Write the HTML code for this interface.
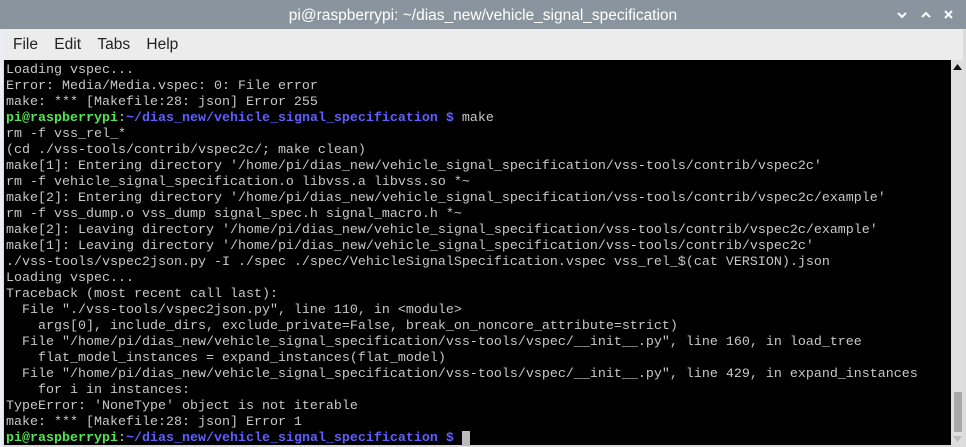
<!DOCTYPE html>
<html><head><style>
body{margin:0;width:966px;height:447px;overflow:hidden;background:#dcdcdc;font-family:"Liberation Sans",sans-serif;position:relative}
#title{position:absolute;left:0;top:0;width:966px;height:29px;background:#8a949e;color:#fff;font-size:15.5px;text-align:center;line-height:31px}
#menu{position:absolute;left:3px;top:29px;width:960px;height:31px;background:#ececec;font-size:15.5px;line-height:32px}
#menu span{margin-left:10px;margin-right:2px;color:#222}
#term{position:absolute;left:4px;top:60px;width:947px;height:385px;background:#000}
pre{margin:0;position:absolute;left:2px;top:3px;font-family:"Liberation Mono",monospace;font-size:13.33px;line-height:16px;color:#c8c8c8}
.g{color:#55e555;font-weight:bold}.b{color:#5f5fff;font-weight:bold}
.cur{background:#bbb;color:#bbb}
#sb{position:absolute;left:951px;top:60px;width:12px;height:385px;background:#dedede}
#thumb{position:absolute;left:954px;top:392px;width:8px;height:40px;background:#a8a8a8}
#lstrip{position:absolute;left:0;top:29px;width:3px;height:418px;background:#e8eef4}
</style></head><body>
<div id="title">pi@raspberrypi: ~/dias_new/vehicle_signal_specification
<svg style="position:absolute;left:896px;top:10px" width="60" height="10"><path d="M2 3l4 4 4-4" stroke="#fff" stroke-width="2" fill="none"/><path d="M26 7l4-4 4 4" stroke="#fff" stroke-width="2" fill="none"/><path d="M49 1l7 7M56 1l-7 7" stroke="#fff" stroke-width="2"/></svg></div>
<div id="lstrip"></div>
<div id="menu"><span>File</span> <span>Edit</span> <span>Tabs</span> <span>Help</span></div>
<div id="term"><pre>Loading vspec...
Error: Media/Media.vspec: 0: File error
make: *** [Makefile:28: json] Error 255
<span class="g">pi@raspberrypi</span>:<span class="b">~/dias_new/vehicle_signal_specification $</span> make
rm -f vss_rel_*
(cd ./vss-tools/contrib/vspec2c/; make clean)
make[1]: Entering directory '/home/pi/dias_new/vehicle_signal_specification/vss-tools/contrib/vspec2c'
rm -f vehicle_signal_specification.o libvss.a libvss.so *~
make[2]: Entering directory '/home/pi/dias_new/vehicle_signal_specification/vss-tools/contrib/vspec2c/example'
rm -f vss_dump.o vss_dump signal_spec.h signal_macro.h *~
make[2]: Leaving directory '/home/pi/dias_new/vehicle_signal_specification/vss-tools/contrib/vspec2c/example'
make[1]: Leaving directory '/home/pi/dias_new/vehicle_signal_specification/vss-tools/contrib/vspec2c'
./vss-tools/vspec2json.py -I ./spec ./spec/VehicleSignalSpecification.vspec vss_rel_$(cat VERSION).json
Loading vspec...
Traceback (most recent call last):
  File "./vss-tools/vspec2json.py", line 110, in &lt;module&gt;
    args[0], include_dirs, exclude_private=False, break_on_noncore_attribute=strict)
  File "/home/pi/dias_new/vehicle_signal_specification/vss-tools/vspec/__init__.py", line 160, in load_tree
    flat_model_instances = expand_instances(flat_model)
  File "/home/pi/dias_new/vehicle_signal_specification/vss-tools/vspec/__init__.py", line 429, in expand_instances
    for i in instances:
TypeError: 'NoneType' object is not iterable
make: *** [Makefile:28: json] Error 1
<span class="g">pi@raspberrypi</span>:<span class="b">~/dias_new/vehicle_signal_specification $</span> <span class="cur">_</span></pre></div>
<div id="sb"><svg style="position:absolute;left:2px;top:4px" width="9" height="6"><path d="M0 6L4.5 0 9 6z" fill="#111"/></svg>
<svg style="position:absolute;left:2px;top:376px" width="9" height="6"><path d="M0 0L4.5 6 9 0z" fill="#bbb"/></svg></div>
<div id="thumb"></div>
</body></html>
